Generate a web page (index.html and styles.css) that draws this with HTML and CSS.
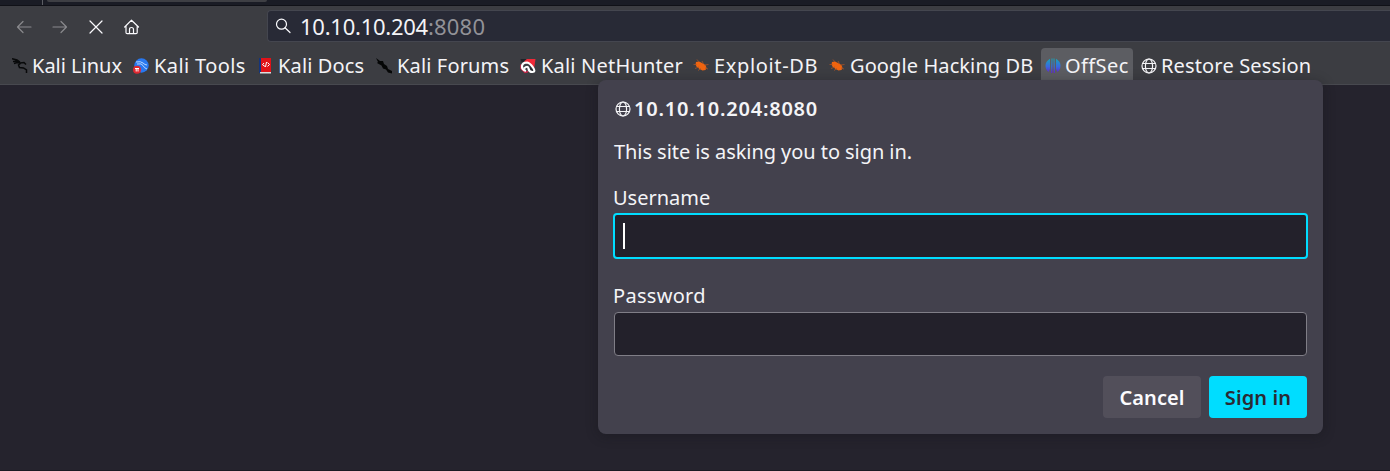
FILE: index.html
```html
<!DOCTYPE html>
<html lang="en">
<head>
<meta charset="utf-8">
<title>Sign in</title>
<link rel="stylesheet" href="styles.css">
</head>
<body>
<svg class="defs" width="0" height="0">
  <symbol id="globe" viewBox="0 0 16 16"><g fill="none" stroke="currentColor" stroke-width="1.2"><circle cx="8" cy="8" r="7"/><ellipse cx="8" cy="8" rx="3.6" ry="7"/><path d="M1.5 5.5h13M1.5 10.5h13"/></g></symbol>
  <symbol id="bug" viewBox="0 0 16 16"><path d="M3 4 6 3.500l3 1.500 3.500 2 1 3-1 2-3 .5-3-1.500-3-2.500-1-2z" fill="#f0640f"/><path d="M.5 6.500h3M4 1.500l2 2.500M9 3l1.500 3M11.500 7l4-.5M12 10l3 1M6 9l-4 1.500M8 10.500l-3 2" stroke="#a55428" stroke-width=".8" fill="none"/></symbol>
</svg>
<div class="browser">
  <div class="tabs"><span class="tab-rule"></span><span class="tab"></span></div>
  <div class="nav">
    <div class="controls">
      <svg class="dim" width="16" height="16" viewBox="0 0 16 16"><path d="M15 8H1.500M7 2.500 1.500 8 7 13.500"/></svg>
      <svg class="dim" width="16" height="16" viewBox="0 0 16 16"><path d="M1 8h13.500M9 2.500 14.500 8 9 13.500"/></svg>
      <svg width="16" height="16" viewBox="0 0 16 16"><path d="m2 2 12 12M14 2 2 14"/></svg>
      <svg width="16" height="16" viewBox="0 0 16 16"><path d="M.7 8 7.500 1.200 14.500 8M2 7v6.500q0 1.200 1.200 1.200h8.800q1.200 0 1.200-1.200V7M5.500 14.500V10.500q0-2 2-2t2 2v4"/></svg>
    </div>
    <div class="urlbar">
      <svg width="16" height="16" viewBox="0 0 16 16"><circle cx="6.500" cy="6.200" r="5"/><path d="m10 9.800 5 4.700"/></svg>
      <span class="url">10.10.10.204<span class="port">:8080</span></span>
    </div>
  </div>
  <div class="bookmarks">
    <a class="bm linux"><svg width="16" height="16" viewBox="0 0 16 16"><path d="M0 .7 5 2l3 2M1 3.500l5-.5M2 5.500l3-1 3 .5 4-.5 2 2M9 5 6.500 7l1 2.500 4 .5 3 2v3M3 2l4 2" fill="none" stroke="#08090a" stroke-width="1.500"/></svg><span>Kali Linux</span></a>
    <a class="bm tools"><svg width="16" height="16" viewBox="0 0 16 16"><circle cx="8.500" cy="7.500" r="7.200" fill="#2878f0"/><path d="M3 4q5-1 7 1t4 2M4 6q5-1 6 1.500t4 3.500" fill="none" stroke="#b8d8ff"/><circle cx="4" cy="11.800" r="4" fill="#e02830"/><path d="M2 10.500h4M3.200 10.500v3M5 10.500v3" stroke="#fff" fill="none"/></svg><span>Kali Tools</span></a>
    <a class="bm docs"><svg width="16" height="16" viewBox="0 0 16 16"><path fill="#14357c" d="M2 0h2v15H2z"/><path fill="#e01218" d="M4 0h10v14H4z"/><path fill="#ddd" d="M3 14h11v1.500H3z"/><path d="M7 5 5.500 6.700 8 8.500M10.500 4.500l2 2-2 2M9.500 4 8.500 9" stroke="#fff" fill="none"/></svg><span>Kali Docs</span></a>
    <a class="bm forums"><svg width="16" height="16" viewBox="0 0 16 16"><path d="M0 0l4 3 3 0 1 3 3 2 1 3 4 2v2.500l-4-1-2-3-3-1-1.500-3L1 5l1-1z" fill="#050606"/></svg><span>Kali Forums</span></a>
    <a class="bm hunter"><svg width="16" height="16" viewBox="0 0 16 16"><path d="M.5 1h6L2 5zM10 9l5 5-5 1z" fill="#202228"/><path d="M4 3.500 7 1h8.500L14 11 9 6z" fill="#f02938"/><path d="M1 6.500v4l4 4 3-1" fill="none" stroke="#d32649" stroke-width="1.500"/><path d="M6 13Q1.500 11.500 2 8t5-3.500q3 .5 6 5t-.5 4.500-4-3.500-4.500 0" fill="none" stroke="#fff" stroke-width="2.200"/></svg><span>Kali NetHunter</span></a>
    <a class="bm exploit"><svg width="16" height="16"><use href="#bug"/></svg><span>Exploit-DB</span></a>
    <a class="bm hacking"><svg width="16" height="16"><use href="#bug"/></svg><span>Google Hacking DB</span></a>
    <a class="bm offsec"><svg width="16" height="16" viewBox="0 0 16 16"><defs><linearGradient id="os" x2="0" y2="1"><stop stop-color="#17a6b8"/><stop offset=".55" stop-color="#386be0"/><stop offset="1" stop-color="#6227c8"/></linearGradient></defs><path d="M5 .8V11l-1.500 3Q.5 11.500.5 7.500T5 .8M6.500.5h1L7.300 15H6zM8.500.5h1L10 15H8.700zM11 .8q4.500 2.700 4.500 6.700t-3 6.500L11 11z" fill="url(#os)"/></svg><span>OffSec</span></a>
    <a class="bm restore"><svg width="16" height="16"><use href="#globe"/></svg><span>Restore Session</span></a>
  </div>
  <div class="page">
    <form class="dialog">
      <div class="host"><svg width="16" height="16"><use href="#globe"/></svg><span>10.10.10.204:8080</span></div>
      <p class="message"><span>This site is asking you to sign in.</span></p>
      <div class="label user"><span>Username</span></div>
      <div class="field focused"><i class="caret"></i></div>
      <div class="label pass"><span>Password</span></div>
      <div class="field"></div>
      <div class="actions"><button type="button" class="cancel">Cancel</button><button type="button" class="signin">Sign in</button></div>
    </form>
  </div>
</div>
</body>
</html>
```
FILE: styles.css
```css
* { box-sizing: border-box; }
body { margin: 0; background: #25232d; color: #f4f4f7; font: 20px/28px "Noto Sans", sans-serif; overflow: hidden; }
.defs { position: absolute; }
svg { flex: none; }
.browser { width: 1390px; height: 471px; display: flex; flex-direction: column; }
.tabs { height: 6px; background: #1a1c25; border-bottom: 1px solid #101117; display: flex; }
.tab-rule { width: 1px; height: 5px; margin-left: 42px; background: #5c5e64; }
.tab { width: 220px; height: 2px; margin-left: 4px; background: #3e3f44; border-radius: 0 0 3px 3px; }
.nav { height: 42px; background: #3c3d42; display: flex; padding-top: 4px; }
.controls { width: 267px; height: 34px; padding-left: 16px; display: flex; gap: 20px; align-items: center; }
.controls svg, .urlbar svg { fill: none; stroke: #fbfbfe; stroke-width: 1.2; stroke-linecap: round; stroke-linejoin: round; }
.controls .dim { stroke: #89898d; }
.urlbar { flex: 1; height: 32px; background: #282a36; border: 1px solid #44464f; border-right: 0; border-radius: 4px 0 0 4px; padding-left: 7px; display: flex; align-items: center; gap: 9px; }
.url { font-size: 22px; letter-spacing: -.25px; }
.port { color: #929298; letter-spacing: .2px; }
.bookmarks { height: 37px; background: #3c3d42; border-bottom: 1px solid #48494f; display: flex; padding-left: 8px; }
.bm { height: 36px; display: flex; align-items: center; gap: 4px; padding-left: 4px; white-space: nowrap; border-radius: 4px; flex: none; }
.linux { width: 121px; }
.tools { width: 124px; gap: 5px; letter-spacing: .4px; }
.docs { width: 119px; gap: 5px; letter-spacing: .15px; }
.forums { width: 144px; gap: 5px; letter-spacing: .15px; }
.hunter { width: 173px; gap: 5px; letter-spacing: .2px; }
.exploit { width: 136px; gap: 5px; letter-spacing: .65px; }
.hacking { width: 216px; gap: 5px; letter-spacing: .1px; }
.offsec { width: 92px; background: #5c5d62; letter-spacing: .4px; }
.restore { width: 180px; margin-left: 4px; letter-spacing: .15px; }
.page { flex: 1; padding-left: 598px; border-bottom: 1px solid #1c1b23; }
.dialog { position: relative; width: 725px; height: 354px; margin-top: -5px; padding: 15px 15px 16px; background: #43414d; border-radius: 8px; box-shadow: 0 2px 12px rgba(20,20,24,.4); display: flex; flex-direction: column; }
.host { height: 28px; display: flex; align-items: center; gap: 3px; font-weight: 600; padding-left: 2px; letter-spacing: .78px; }
.message { margin: 15px 0 0 1px; height: 28px; letter-spacing: -.06px; }
.label { height: 28px; }
.user { margin-top: 18px; }
.field { height: 44px; border: 1px solid #807e87; border-radius: 4px; background: #23212b; margin: 0 1px; }
.focused { margin: 1px 0 0; height: 46px; border: 2px solid #00ddff; padding: 8px; }
.caret { display: block; width: 2px; height: 26px; background: #fff; }
.pass { margin: 23px 0 2px; letter-spacing: .3px; }
.actions { display: flex; justify-content: flex-end; gap: 8px; margin: 20px 1px 0 0; }
button { width: 98px; height: 42px; padding: 2px 0 0; border: 0; border-radius: 4px; font: 600 20px/40px "Noto Sans", sans-serif; color: #fbfbfe; background: #524f5a; letter-spacing: .1px; }
.signin { background: #00ddff; color: #2b2a33; }
```
